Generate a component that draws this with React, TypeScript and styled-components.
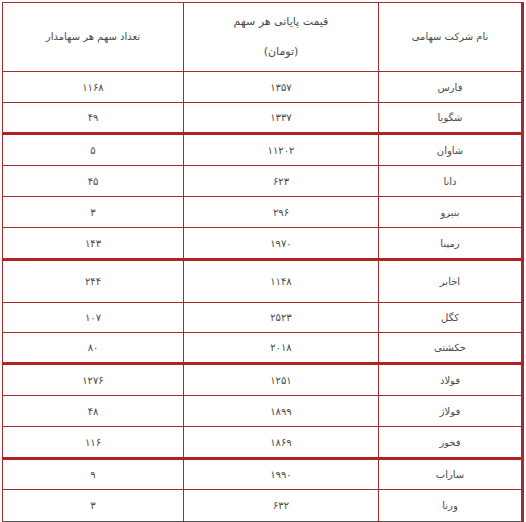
import React from "react";
import styled, { createGlobalStyle } from "styled-components";

const GlobalStyle = createGlobalStyle`
  html, body {
    margin: 0;
    padding: 0;
    background: #ffffff;
  }
  body {
    font-family: "DejaVu Sans", "Liberation Sans", sans-serif;
  }
`;

type Row = { name: string; price: string; count: string; h: number; group?: boolean };

const rows: Row[] = [
  { name: "فارس", price: "۱۳۵۷", count: "۱۱۶۸", h: 31 },
  { name: "شگویا", price: "۱۳۳۷", count: "۴۹", h: 31 },
  { name: "شاوان", price: "۱۱۲۰۲", count: "۵", h: 32, group: true },
  { name: "دانا", price: "۶۲۳", count: "۴۵", h: 31 },
  { name: "بنیرو", price: "۲۹۶", count: "۳", h: 31 },
  { name: "رمپنا", price: "۱۹۷۰", count: "۱۴۳", h: 32 },
  { name: "اخابر", price: "۱۱۴۸", count: "۲۴۴", h: 43, group: true },
  { name: "کگل", price: "۲۵۲۳", count: "۱۰۷", h: 30 },
  { name: "حکشتی", price: "۲۰۱۸", count: "۸۰", h: 31 },
  { name: "فولاد", price: "۱۲۵۱", count: "۱۲۷۶", h: 32, group: true },
  { name: "فولاژ", price: "۱۸۹۹", count: "۴۸", h: 31 },
  { name: "فخوز", price: "۱۸۶۹", count: "۱۱۶", h: 32 },
  { name: "ساراب", price: "۱۹۹۰", count: "۹", h: 31, group: true },
  { name: "ورنا", price: "۶۳۲", count: "۳", h: 32 },
];

const Wrapper = styled.div`
  padding: 2px 0 0 2px;
`;

const Table = styled.table`
  direction: rtl;
  width: 520px;
  border-collapse: collapse;
  table-layout: fixed;
  border-top: 1px solid #8e2b2b;
  border-left: 1px solid #8e2b2b;
  border-right: 3px solid #9a2d2d;
  border-bottom: 1px solid #555555;
  color: #4a4a4a;
  font-size: 10px;
`;

const HeadCell = styled.td`
  height: 68px;
  text-align: center;
  vertical-align: middle;
  border: 1px solid #a12a2a;
  padding: 0 4px;
  line-height: 14px;
`;

const HeadLine = styled.div`
  font-size: 11px;
  & + & {
    margin-top: 16px;
  }
`;

const BodyRow = styled.tr<{ $group?: boolean }>`
  & > td {
    border-top: ${(p) => (p.$group ? "3px solid #b02323" : "1px solid #a12a2a")};
  }
`;

const Cell = styled.td`
  text-align: center;
  vertical-align: middle;
  border-left: 1px solid #a12a2a;
  border-right: 1px solid #a12a2a;
  padding: 0 4px;
`;

export default function App() {
  return (
    <>
      <GlobalStyle />
      <Wrapper>
        <Table>
          <colgroup>
            <col style={{ width: 144 }} />
            <col style={{ width: 195 }} />
            <col style={{ width: 181 }} />
          </colgroup>
          <tbody>
            <tr>
              <HeadCell>نام شرکت سهامی</HeadCell>
              <HeadCell>
                <HeadLine>قیمت پایانی هر سهم</HeadLine>
                <HeadLine>(تومان)</HeadLine>
              </HeadCell>
              <HeadCell>تعداد سهم هر سهامدار</HeadCell>
            </tr>
            {rows.map((r) => (
              <BodyRow key={r.name} $group={r.group} style={{ height: r.h }}>
                <Cell>{r.name}</Cell>
                <Cell>{r.price}</Cell>
                <Cell>{r.count}</Cell>
              </BodyRow>
            ))}
          </tbody>
        </Table>
      </Wrapper>
    </>
  );
}
